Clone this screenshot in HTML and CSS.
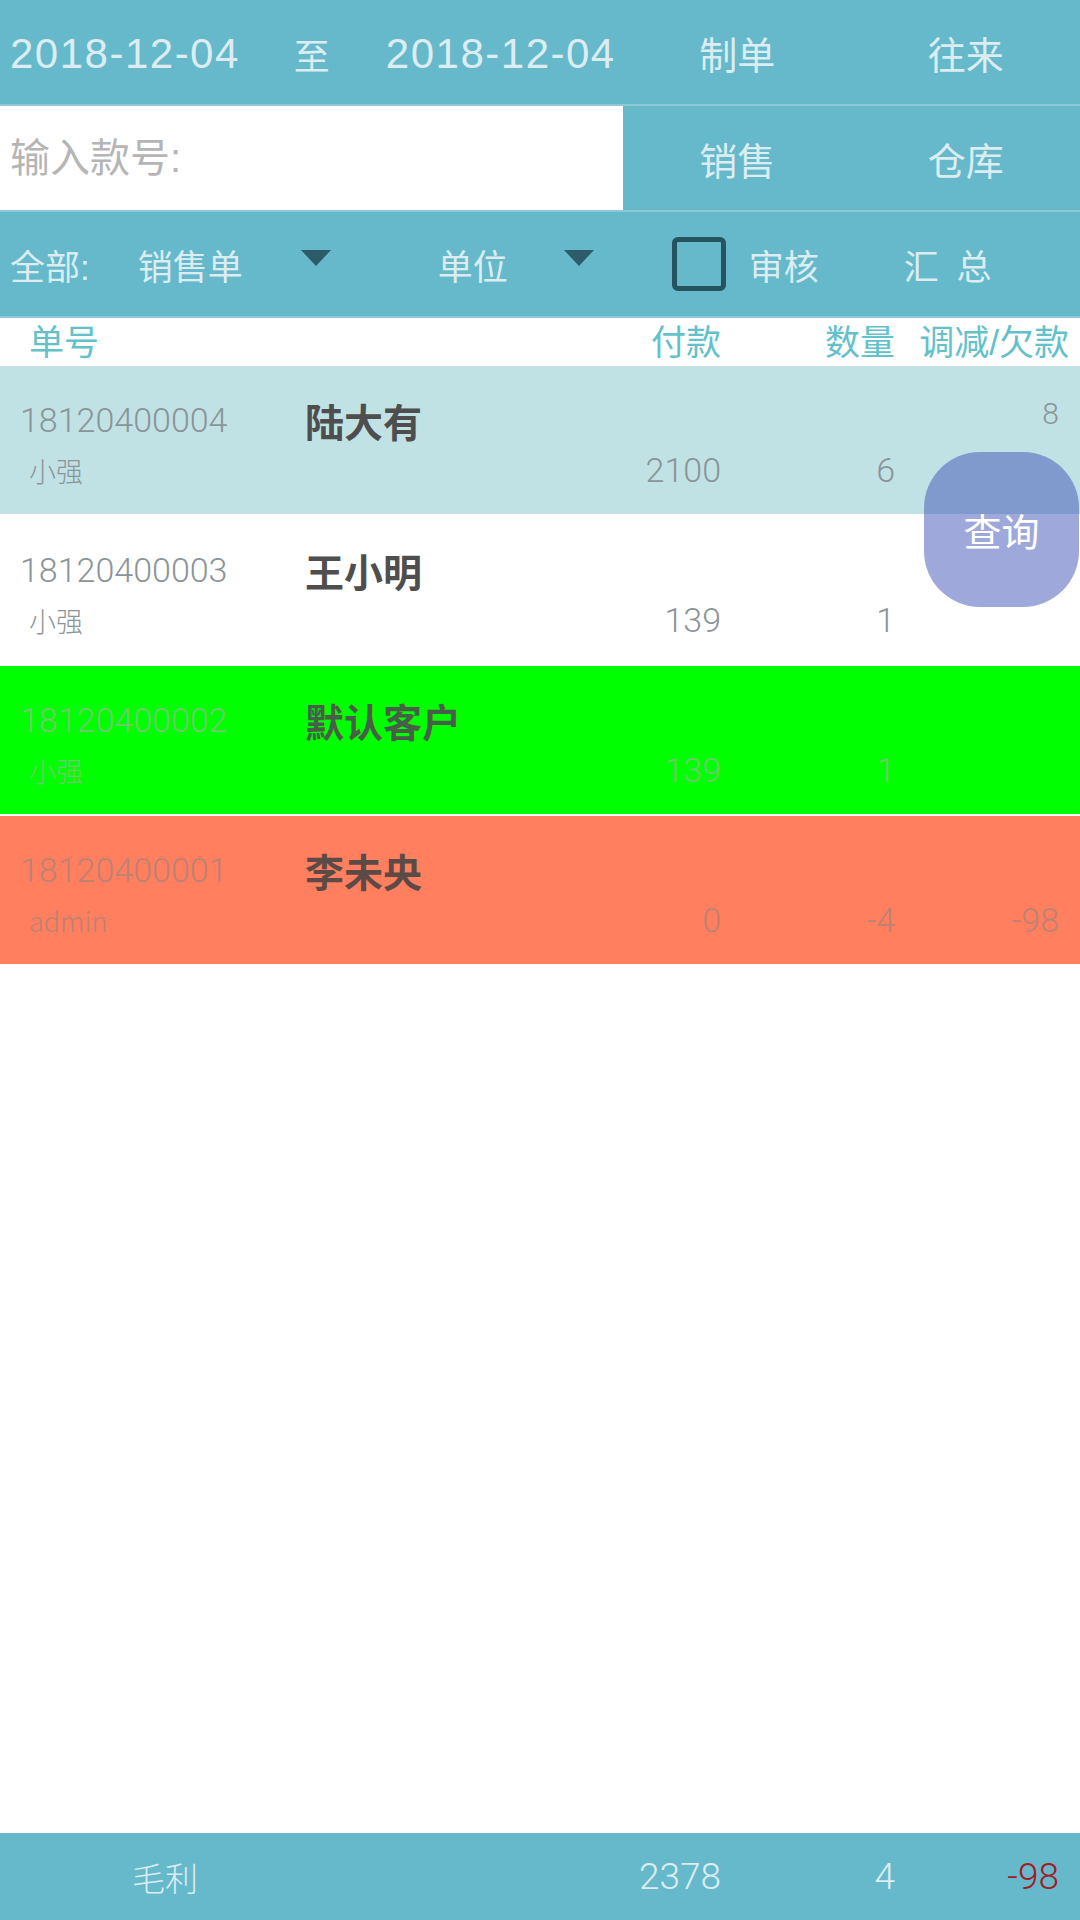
FILE: index.html
```html
<!DOCTYPE html>
<html lang="zh-CN">
<head>
  <meta charset="UTF-8" />
  <meta name="viewport" content="width=device-width, initial-scale=1.0"/>
  <title>销售单查询</title>
  <link rel="stylesheet" href="styles.css">
</head>
<body>
  <div class="page">

    <!-- 日期 / 制单 / 往来 -->
    <div class="bar">
      <div class="bar-left dates">
        <span class="date">2018-12-04</span>
        <span class="to">至</span>
        <span class="date">2018-12-04</span>
      </div>
      <div class="bar-cell">制单</div>
      <div class="bar-cell">往来</div>
    </div>

    <!-- 款号输入 -->
    <div class="bar">
      <div class="bar-left search">
        <input type="text" placeholder="输入款号:" />
      </div>
      <div class="bar-cell">销售</div>
      <div class="bar-cell">仓库</div>
    </div>

    <!-- 筛选 -->
    <div class="bar filter">
      <span class="f-all">全部:</span>
      <span class="f-type">销售单</span>
      <span class="caret caret-1"></span>
      <span class="f-unit">单位</span>
      <span class="caret caret-2"></span>
      <span class="check"></span>
      <span class="f-audit">审核</span>
      <span class="f-sum">汇 总</span>
    </div>

    <!-- 表头 -->
    <div class="thead">
      <span class="th-no">单号</span>
      <span></span>
      <span class="num">付款</span>
      <span class="num">数量</span>
      <span class="num th-last">调减/欠款</span>
    </div>

    <div class="list">
      <div class="row row-sel">
        <span class="no">18120400004</span>
        <span class="name">陆大有</span>
        <span></span>
        <span></span>
        <span class="num top">8</span>
        <span class="user">小强</span>
        <span></span>
        <span class="num">2100</span>
        <span class="num">6</span>
        <span class="num"></span>
      </div>

      <div class="row">
        <span class="no">18120400003</span>
        <span class="name">王小明</span>
        <span></span>
        <span></span>
        <span class="num top"></span>
        <span class="user">小强</span>
        <span></span>
        <span class="num">139</span>
        <span class="num">1</span>
        <span class="num"></span>
      </div>

      <div class="row row-green">
        <span class="no">18120400002</span>
        <span class="name">默认客户</span>
        <span></span>
        <span></span>
        <span class="num top"></span>
        <span class="user">小强</span>
        <span></span>
        <span class="num">139</span>
        <span class="num">1</span>
        <span class="num"></span>
      </div>

      <div class="row row-red">
        <span class="no">18120400001</span>
        <span class="name">李未央</span>
        <span></span>
        <span></span>
        <span class="num top"></span>
        <span class="user">admin</span>
        <span></span>
        <span class="num">0</span>
        <span class="num">-4</span>
        <span class="num">-98</span>
      </div>
    </div>

    <!-- 合计 -->
    <div class="footer">
      <span class="ft-label">毛利</span>
      <span></span>
      <span class="num">2378</span>
      <span class="num">4</span>
      <span class="num neg">-98</span>
    </div>

    <button class="query-btn">查询</button>
  </div>
</body>
</html>
```

FILE: styles.css
```css
body {
  margin: 0;
  font-family: "Liberation Sans", "Noto Sans CJK SC", sans-serif;
  background-color: #fff;
}

.page {
  position: relative;
  height: 1920px;
  display: flex;
  flex-direction: column;
}

/* top bars */
.bar {
  display: flex;
  height: 104px;
  align-items: center;
  background-color: #66b9cb;
  border-bottom: 2px solid #8fc8d5;
  color: #dcedf1;
  font-size: 38px;
}

.bar-left {
  width: 623px;
  height: 100%;
  display: flex;
  align-items: center;
}

.dates {
  padding-left: 10px;
  padding-top: 4px;
  box-sizing: border-box;
}

.date {
  font-size: 42px;
  letter-spacing: 1.5px;
}

.to {
  margin: 0 56px 0 54px;
  font-size: 36px;
}

.bar-cell {
  flex: 1;
  text-align: center;
}

.search {
  background-color: #fff;
}

.search input {
  width: 100%;
  height: 100%;
  border: none;
  outline: none;
  padding: 0 10px;
  box-sizing: border-box;
  font-family: "Liberation Sans", "Noto Sans CJK SC", sans-serif;
  font-size: 40px;
  color: #555;
  background: transparent;
}

.search input::placeholder {
  color: #b5b5b5;
}

/* filter row */
.filter {
  font-size: 35px;
}

.f-all {
  margin-left: 10px;
}

.f-type {
  margin-left: 48px;
}

.caret {
  width: 0;
  height: 0;
  border-left: 15px solid transparent;
  border-right: 15px solid transparent;
  border-top: 16px solid #2c5c69;
  margin-top: -12px;
}

.caret-1 {
  margin-left: 58px;
}

.f-unit {
  margin-left: 107px;
}

.caret-2 {
  margin-left: 56px;
}

.check {
  width: 44px;
  height: 44px;
  border: 5px solid #27535f;
  border-radius: 6px;
  margin-left: 78px;
}

.f-audit {
  margin-left: 23px;
}

.f-sum {
  margin-left: 85px;
  letter-spacing: 4px;
}

/* table */
.thead,
.row,
.footer {
  display: grid;
  grid-template-columns: 285px 1fr 120px 174px 164px;
  padding: 0 21px 0 20px;
}

.num {
  text-align: right;
}

.thead {
  height: 48px;
  align-items: center;
  color: #62c1c9;
  font-size: 35px;
  line-height: 1;
}

.th-no {
  padding-left: 9px;
}

.th-last {
  margin-right: -10px;
  white-space: nowrap;
}

.list {
  flex: 1;
}

.row {
  height: 148px;
  margin-bottom: 2px;
  grid-template-rows: 58px 42px;
  align-content: start;
  padding-top: 25px;
  box-sizing: border-box;
  color: #8b9499;
  font-size: 34px;
  font-family: "Roboto", "Noto Sans CJK SC", sans-serif;
  font-weight: 300;
}

.row span {
  align-self: center;
}

.no {
  font-size: 34px;
  font-weight: 300;
}

.name {
  font-family: "Noto Sans CJK SC", sans-serif;
  font-weight: 700;
  font-size: 39px;
  color: #4e4e4e;
}

.user {
  font-family: "Noto Sans CJK SC", sans-serif;
  font-size: 27px;
  padding-left: 9px;
}

.row .top {
  align-self: start;
  padding-top: 5px;
  font-size: 30px;
}

.row-sel {
  background-color: #c0e2e5;
}

.row-green {
  background-color: #00ff00;
  color: #72c972;
}

.row-green .name {
  color: #485e48;
}

.row-red {
  background-color: #ff7f5e;
  color: #bb8275;
}

.row-red .name {
  color: #5b4a45;
}

/* footer */
.footer {
  height: 87px;
  align-items: center;
  background-color: #66b9cb;
  color: #dcedf1;
  font-size: 37px;
  font-family: "Roboto", "Noto Sans CJK SC", sans-serif;
  font-weight: 300;
}

.ft-label {
  font-family: "Noto Sans CJK SC", sans-serif;
  padding-left: 112px;
  font-size: 33px;
}

.neg {
  color: #a21b25;
}

/* floating query button */
.query-btn {
  position: absolute;
  left: 924px;
  top: 452px;
  width: 155px;
  height: 155px;
  border: none;
  border-radius: 56px;
  background-color: rgba(63, 81, 181, 0.5);
  color: #fff;
  font-family: "Noto Sans CJK SC", sans-serif;
  font-size: 38px;
  padding: 0;
}
```
